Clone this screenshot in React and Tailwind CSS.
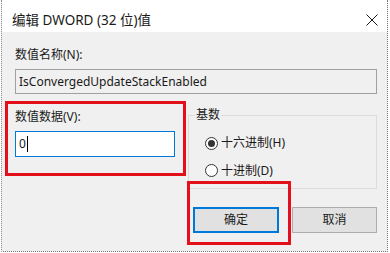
import React from 'react';

const font = { fontFamily: '"Noto Sans", "Noto Sans CJK SC", sans-serif' };

const Radio = ({ checked, label }) => (
    <div className="flex items-center h-[16px]">
        <span className="w-[13px] h-[13px] rounded-full border border-[#333333] bg-white flex items-center justify-center">
            {checked && <span className="w-[7px] h-[7px] rounded-full bg-[#333333]" />}
        </span>
        <span className="ml-[3px] text-[12px] leading-[16px] text-[#1a1a1a]">{label}</span>
    </div>
);

const App = () => {
    return (
        <div className="relative w-[390px] h-[253px] bg-white overflow-hidden" style={font}>
            <div className="ml-[1px] w-[387px] h-[252px] flex flex-col bg-[#f0f0f0] border-l border-dotted border-l-[#8a8a8a] border-r border-r-[#7a7a7a] border-b border-b-[#7a7a7a]">
                {/* title bar */}
                <div className="h-[32px] bg-white flex items-start justify-between pl-[10px] pr-[9px] pt-[11px]">
                    <span className="text-[13.5px] leading-[19px] text-[#1a1a1a]">编辑 DWORD (32 位)值</span>
                    <svg width="12" height="12" viewBox="0 0 12 12" className="mt-[3px]">
                        <path d="M0.5 0.5 L11.5 11.5 M11.5 0.5 L0.5 11.5" stroke="#1a1a1a" strokeWidth="1" fill="none" />
                    </svg>
                </div>

                {/* body */}
                <div className="flex flex-col pl-[13px] pr-[10px] pt-[15px]">
                    <div className="text-[12px] leading-[16px] text-[#1a1a1a]">数值名称(N):</div>
                    <div className="mt-[6px] h-[25px] border border-[#a0a0a0] bg-[#f0f0f0] flex items-center px-[3px] text-[12px] text-[#1a1a1a]">
                        IsConvergedUpdateStackEnabled
                    </div>

                    <div className="mt-[15px] flex">
                        <div className="w-[173px] flex flex-col">
                            <div className="text-[12px] leading-[16px] text-[#1a1a1a]">数值数据(V):</div>
                            <div className="mt-[6px] w-[160px] h-[26px] border border-[#0078d7] bg-white flex items-center px-[3px] text-[12px] text-[#1a1a1a]">
                                0<span className="ml-[1px] w-[1px] h-[16px] bg-black" />
                            </div>
                        </div>
                        <div className="flex flex-col w-[189px]">
                            <div className="relative mt-[6px] h-[74px] border border-[#dcdcdc] flex flex-col pl-[16px] pt-[19px] gap-[11.5px]">
                                <span className="absolute -top-[9px] left-[6px] px-[1px] bg-[#f0f0f0] text-[12px] leading-[16px] text-[#1a1a1a]">基数</span>
                                <Radio checked label="十六进制(H)" />
                                <Radio label="十进制(D)" />
                            </div>
                            <div className="mt-[18px] flex justify-end gap-[13px]">
                                <button className="w-[86px] h-[26px] border-2 border-[#0078d7] bg-[#e1e1e1] text-[12px] text-[#1a1a1a]">确定</button>
                                <button className="w-[85px] h-[26px] border border-[#adadad] bg-[#e1e1e1] text-[12px] text-[#1a1a1a]">取消</button>
                            </div>
                        </div>
                    </div>
                </div>
            </div>

            {/* red annotation boxes */}
            <div className="absolute left-[5px] top-[101px] w-[181px] h-[75px] border-[3px] border-[#e3101c]" />
            <div className="absolute left-[187px] top-[181px] w-[104px] h-[64px] border-[3px] border-[#e3101c]" />
        </div>
    );
};

export default App;
